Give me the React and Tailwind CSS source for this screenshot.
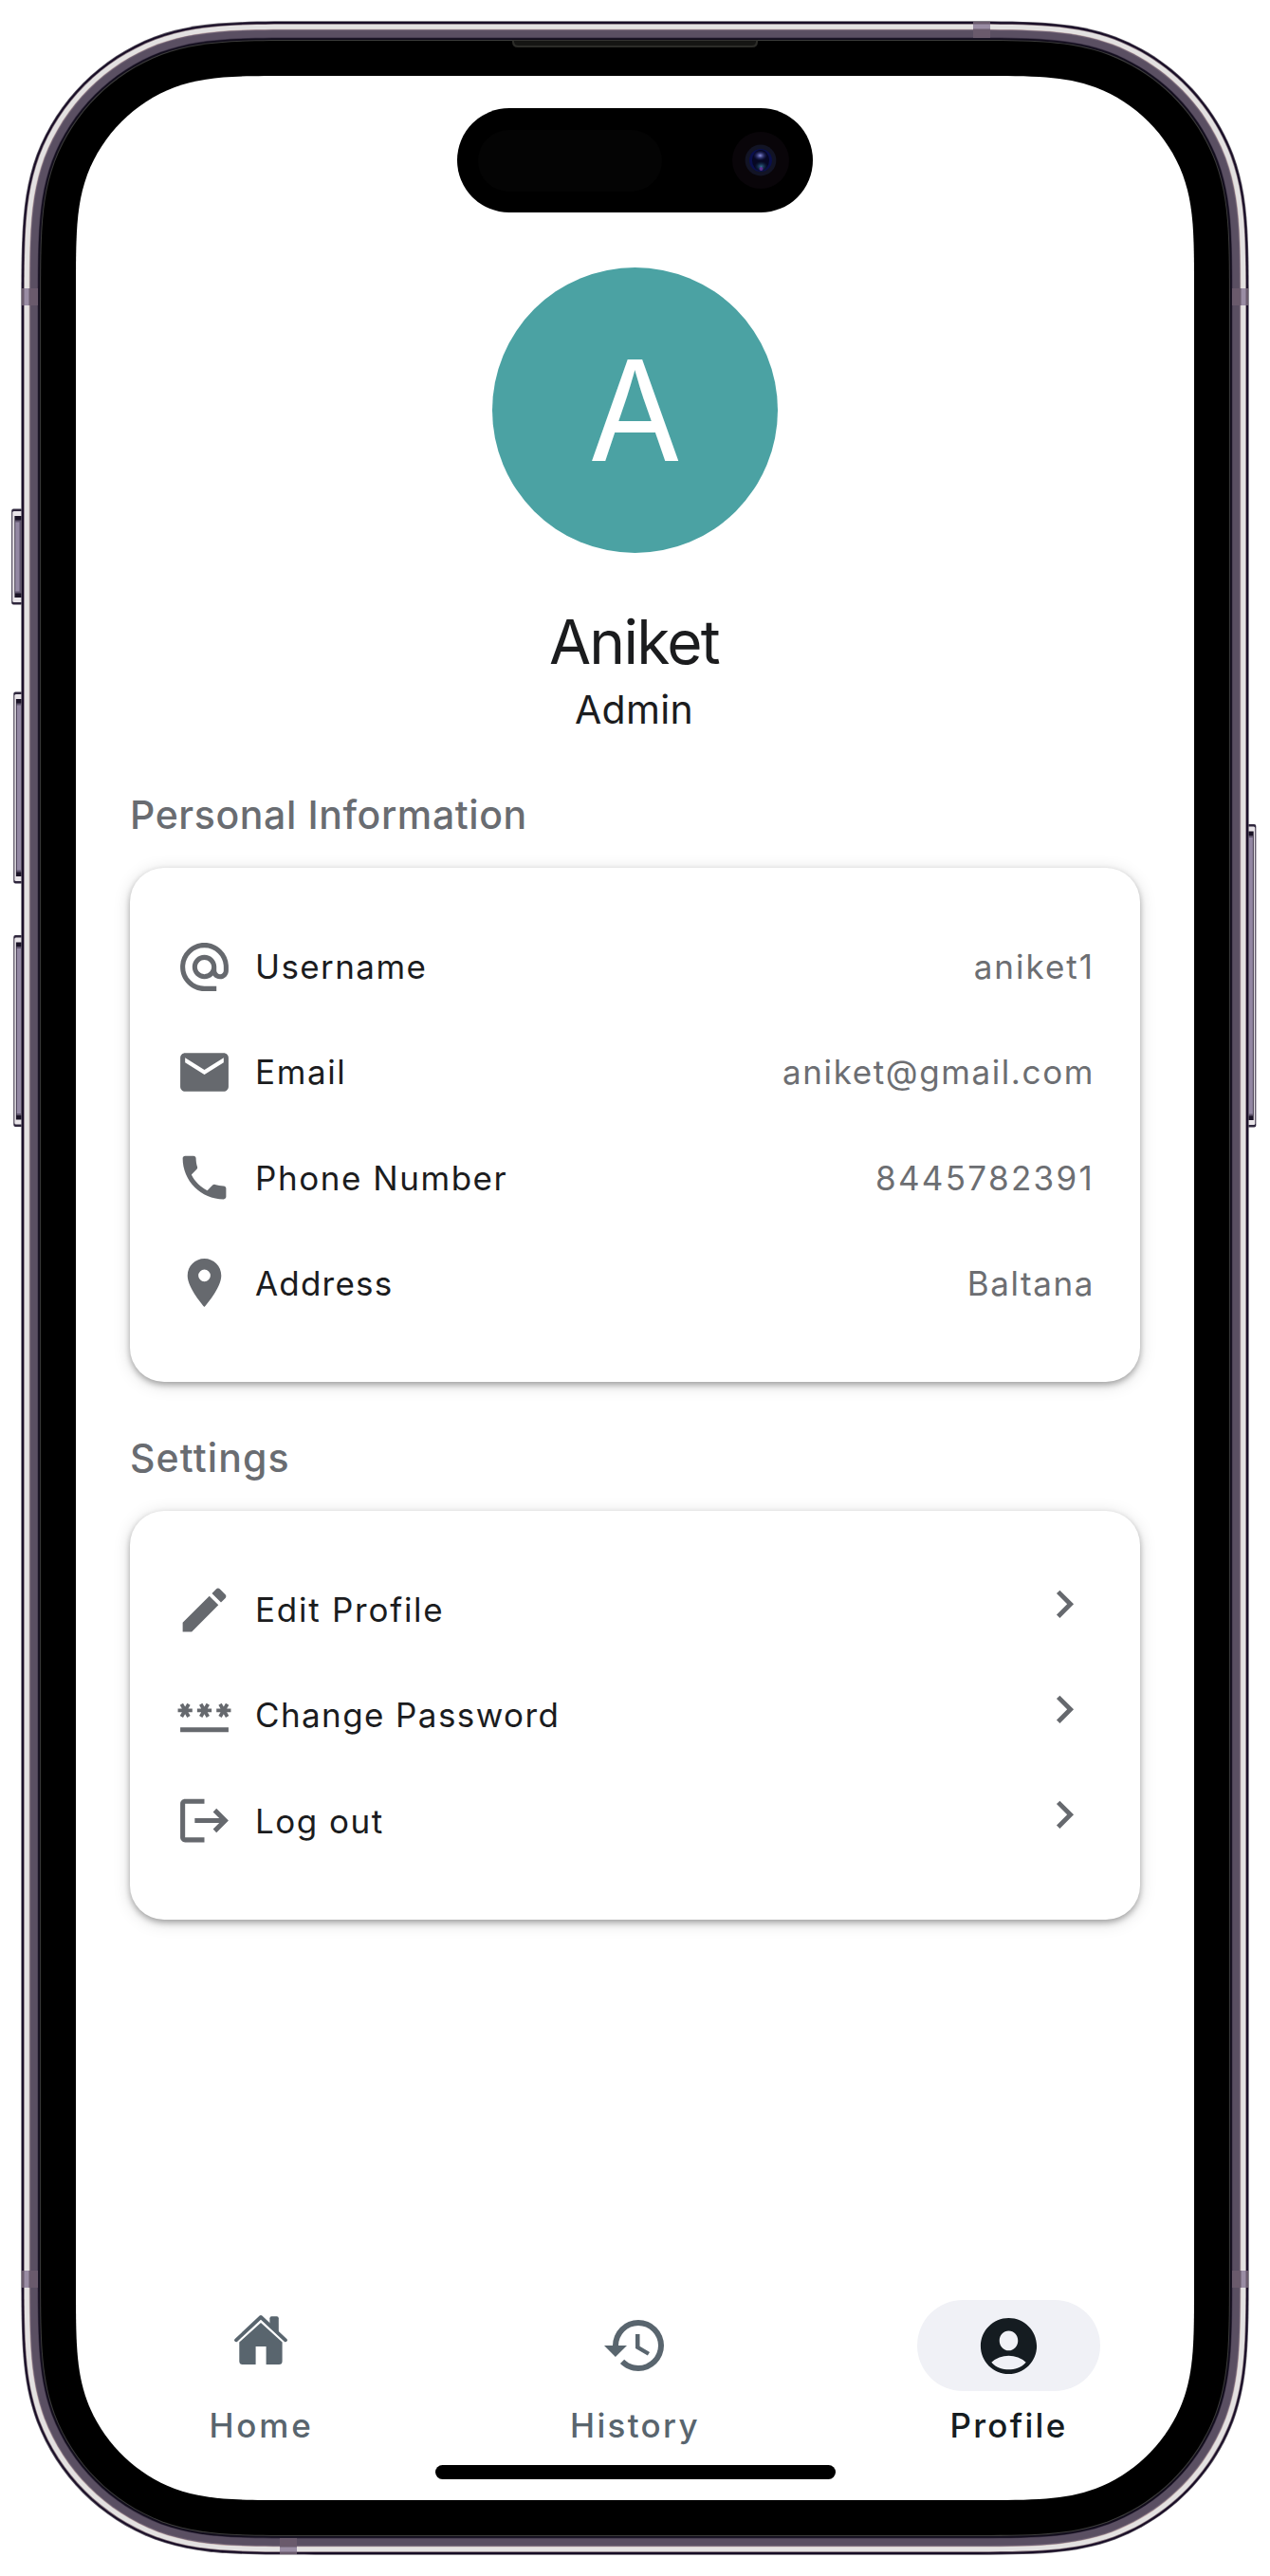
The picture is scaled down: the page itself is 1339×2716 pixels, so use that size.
const ICONS = {
  at: 'M12,15C12.81,15 13.5,14.7 14.11,14.11C14.7,13.5 15,12.81 15,12C15,11.19 14.7,10.5 14.11,9.89C13.5,9.3 12.81,9 12,9C11.19,9 10.5,9.3 9.89,9.89C9.3,10.5 9,11.19 9,12C9,12.81 9.3,13.5 9.89,14.11C10.5,14.7 11.19,15 12,15M12,2C14.75,2 17.1,3 19.05,4.95C21,6.9 22,9.25 22,12V13.45C22,14.45 21.65,15.3 21,16C20.3,16.67 19.5,17 18.5,17C17.3,17 16.31,16.5 15.56,15.5C14.56,16.5 13.38,17 12,17C10.63,17 9.45,16.5 8.46,15.54C7.5,14.55 7,13.38 7,12C7,10.63 7.5,9.45 8.46,8.46C9.45,7.5 10.63,7 12,7C13.38,7 14.55,7.5 15.54,8.46C16.5,9.45 17,10.63 17,12V13.45C17,13.86 17.16,14.22 17.46,14.53C17.76,14.84 18.11,15 18.5,15C18.92,15 19.27,14.84 19.57,14.53C19.87,14.22 20,13.86 20,13.45V12C20,9.81 19.23,7.93 17.65,6.35C16.07,4.77 14.19,4 12,4C9.81,4 7.93,4.77 6.35,6.35C4.77,7.93 4,9.81 4,12C4,14.19 4.77,16.07 6.35,17.65C7.93,19.23 9.81,20 12,20H17V22H12C9.25,22 6.9,21 4.95,19.05C3,17.1 2,14.75 2,12C2,9.25 3,6.9 4.95,4.95C6.9,3 9.25,2 12,2Z',
  email: 'M20 4H4c-1.1 0-1.99.9-1.99 2L2 18c0 1.1.9 2 2 2h16c1.1 0 2-.9 2-2V6c0-1.1-.9-2-2-2zm0 4l-8 5-8-5V6l8 5 8-5v2z',
  phone: 'M6.62 10.79c1.44 2.83 3.76 5.14 6.59 6.59l2.2-2.2c.27-.27.67-.36 1.02-.24 1.12.37 2.33.57 3.57.57.55 0 1 .45 1 1V20c0 .55-.45 1-1 1-9.39 0-17-7.61-17-17 0-.55.45-1 1-1h3.5c.55 0 1 .45 1 1 0 1.25.2 2.45.57 3.57.11.35.03.74-.25 1.02l-2.2 2.2z',
  marker: 'M12 2C8.13 2 5 5.13 5 9c0 5.25 7 13 7 13s7-7.75 7-13c0-3.87-3.13-7-7-7zm0 9.5a2.5 2.5 0 0 1 0-5 2.5 2.5 0 0 1 0 5z',
  pencil: 'M3 17.25V21h3.75L17.81 9.94l-3.75-3.75L3 17.25zM20.71 7.04c.39-.39.39-1.02 0-1.41l-2.34-2.34c-.39-.39-1.02-.39-1.41 0l-1.83 1.83 3.75 3.75 1.83-1.83z',
  password: 'M2 17h20v2H2v-2zm1.15-4.05L4 11.47l.85 1.48 1.3-.75-.85-1.48H7v-1.5H5.3l.85-1.47L4.85 7 4 8.47 3.15 7l-1.3.75.85 1.47H1v1.5h1.7l-.85 1.48 1.3.75zm6.7-.75l1.3.75.85-1.48.85 1.48 1.3-.75-.85-1.48H15v-1.5h-1.7l.85-1.47-1.3-.75L12 8.47 11.15 7l-1.3.75.85 1.47H9v1.5h1.7l-.85 1.48zM23 9.22h-1.7l.85-1.47-1.3-.75L20 8.47 19.15 7l-1.3.75.85 1.47H17v1.5h1.7l-.85 1.48 1.3.75.85-1.48.85 1.48 1.3-.75-.85-1.48H23v-1.5z',
  logout: 'M17 7L15.59 8.41L18.17 11H8V13H18.17L15.59 15.58L17 17L22 12M4 5H12V3H4C2.9 3 2 3.9 2 5V19C2 20.1 2.9 21 4 21H12V19H4V5Z',
  chevron: 'M8.59,16.58L13.17,12L8.59,7.41L10,6L16,12L10,18L8.59,16.58Z',
  history: 'M13.5,8H12V13L16.28,15.54L17,14.33L13.5,12.25V8M13,3A9,9 0 0,0 4,12H1L4.96,16.03L9,12H6A7,7 0 0,1 13,5A7,7 0 0,1 20,12A7,7 0 0,1 13,19C11.07,19 9.32,18.21 8.06,16.94L6.64,18.36C8.27,20 10.5,21 13,21A9,9 0 0,0 22,12A9,9 0 0,0 13,3',
  account: 'M12 2C6.48 2 2 6.48 2 12s4.48 10 10 10 10-4.48 10-10S17.52 2 12 2zm0 4.6c1.83 0 3.3 1.57 3.3 3.5S13.83 13.6 12 13.6s-3.3-1.57-3.3-3.5S10.17 6.6 12 6.6zm0 13.8c-2.03 0-4.43-.62-6.14-2.58a9.2 9.2 0 0 1 12.28 0C16.43 19.78 14.03 20.4 12 20.4z',
};

function Icon({ name, className }) {
  return (
    <svg viewBox="0 0 24 24" fill="currentColor" className={className}>
      <path d={ICONS[name]} />
    </svg>
  );
}

function HomeIcon() {
  return (
    <svg viewBox="0 0 61 61" className="h-[61px] w-[61px]" fill="currentColor">
      <path d="M5 29.3 L31 5 L57 29.3" fill="none" stroke="currentColor" strokeWidth="3.8" strokeLinecap="round" strokeLinejoin="round" />
      <path d="M40.4 12 V6.3 Q40.4 4.3 42.4 4.3 H47.8 Q49.8 4.3 49.8 6.3 V21.5 Z" />
      <path d="M8.3 31.5 L31 11 L53.6 31.5 V51.5 Q53.6 55 50.1 55 H36.6 V36 H25.6 V55 H11.8 Q8.3 55 8.3 51.5 Z" />
    </svg>
  );
}

/* Rounded rectangle whose corners ease gently into the straight edges. */
function smoothRect(x, y, w, h, r) {
  const R = x + w;
  const B = y + h;
  const [a, b, c, d, e, f, g] = [1.39, 1.02, 0.832, 0.6315, 0.0727, 0.374, 0.1706].map((k) => k * r);
  return [
    `M${x + a} ${y}H${R - a}`,
    `C${R - b} ${y} ${R - c} ${y} ${R - d} ${y + e}`,
    `C${R - f} ${y + g} ${R - g} ${y + f} ${R - e} ${y + d}`,
    `C${R} ${y + c} ${R} ${y + b} ${R} ${y + a}`,
    `V${B - a}`,
    `C${R} ${B - b} ${R} ${B - c} ${R - e} ${B - d}`,
    `C${R - g} ${B - f} ${R - f} ${B - g} ${R - d} ${B - e}`,
    `C${R - c} ${B} ${R - b} ${B} ${R - a} ${B}`,
    `H${x + a}`,
    `C${x + b} ${B} ${x + c} ${B} ${x + d} ${B - e}`,
    `C${x + f} ${B - g} ${x + g} ${B - f} ${x + e} ${B - d}`,
    `C${x} ${B - c} ${x} ${B - b} ${x} ${B - a}`,
    `V${y + a}`,
    `C${x} ${y + b} ${x} ${y + c} ${x + e} ${y + d}`,
    `C${x + g} ${y + f} ${x + f} ${y + g} ${x + d} ${y + e}`,
    `C${x + c} ${y} ${x + b} ${y} ${x + a} ${y}Z`,
  ].join('');
}

/* Bezel layers from the outside in: [inset, colour]. */
const LAYERS = [
  [0, '#5b5560'],
  [0.8, '#170c26'],
  [2.7, '#7c6b74'],
  [3.4, '#e3e1e1'],
  [8.4, '#c3ada9'],
  [9, '#6e6175'],
  [10, '#5a4f62'],
  [17.3, '#3b3246'],
  [17.9, '#120d1c'],
  [19.8, '#3c3c3b'],
  [20.8, '#000000'],
];

const LEFT_KEYS = [
  [12.2, 536.5, 101, 3.2],
  [14.3, 729.5, 202, 2.6],
  [14.3, 986, 202, 2.6],
];

/* A side button: dark rim, bright bevel, purple face with a soft highlight. */
function SideKey({ x, y, h, rim, flip }) {
  const w = 12;
  return (
    <g transform={flip ? `translate(${2 * x + w} 0) scale(-1 1)` : undefined}>
      <rect x={x} y={y} width={w} height={h} rx="2" fill="#2f273d" />
      <rect x={x + 1} y={y + 2.4} width={w} height={h - 4.8} rx="1.5" fill="#e9e5e9" />
      <rect x={x + rim} y={y + 7.5} width={w} height={h - 15} fill="#1a1326" />
      <rect x={x + rim + 0.6} y={y + 12} width={w} height={h - 24} fill="#5f556d" />
      <rect x={x + rim + 0.9} y={y + 14} width="4.2" height={h - 28} fill="#9388a3" />
    </g>
  );
}

function PhoneFrame() {
  return (
    <svg viewBox="0 0 1339 2716" className="absolute inset-0 h-full w-full" aria-hidden="true">
      {LEFT_KEYS.map(([x, y, h, rim]) => (
        <SideKey key={y} x={x} y={y} h={h} rim={rim} />
      ))}
      <SideKey x={1312.3} y={869} h={319.5} rim={2.6} flip />
      {LAYERS.map(([i, fill]) => (
        <path key={i} d={smoothRect(22.3 + i, 22.3 + i, 1294.4 - 2 * i, 2671.4 - 2 * i, 223 - i)} fill={fill} />
      ))}
      {[304, 2394].map((y) => (
        <g key={y}>
          <rect x="23" y={y} width="17" height="18" fill="#6a5a6c" />
          <rect x="25.5" y={y} width="5" height="18" fill="#9a8da4" />
          <rect x="1299" y={y} width="17" height="18" fill="#6a5a6c" />
          <rect x="1308.5" y={y} width="5" height="18" fill="#9a8da4" />
        </g>
      ))}
      <rect x="1026" y="23" width="18" height="17" fill="#6a5a6c" />
      <rect x="1026" y="25.5" width="18" height="5" fill="#9a8da4" />
      <rect x="295" y="2676" width="18" height="17" fill="#6a5a6c" />
      <rect x="295" y="2685.5" width="18" height="5" fill="#9a8da4" />
      <path d="M540 42.5H799V44Q799 50 793 50H546Q540 50 540 44Z" fill="#2c2c28" />
      <path d="M542 43H797V43.5Q797 48 792 48H547Q542 48 542 43.5Z" fill="#151513" />
      <path d={smoothRect(80, 80, 1179, 2556, 165)} fill="#ffffff" />
    </svg>
  );
}

function DynamicIsland() {
  return (
    <div className="absolute left-[482px] top-[114px] flex h-[110px] w-[375px] items-center justify-between rounded-full bg-black pl-[22px] pr-[25px]">
      <div className="h-[65px] w-[194px] rounded-full bg-[#040404]" />
      <svg viewBox="0 0 60 60" className="h-[60px] w-[60px]">
        <defs>
          <radialGradient id="glintTop">
            <stop offset="0" stopColor="#8a90e0" />
            <stop offset="1" stopColor="#1c2270" stopOpacity="0" />
          </radialGradient>
          <radialGradient id="glintBottom">
            <stop offset="0" stopColor="#2f6a8c" />
            <stop offset="1" stopColor="#0d2b45" stopOpacity="0" />
          </radialGradient>
        </defs>
        <circle cx="30" cy="30" r="30" fill="#090509" />
        <circle cx="30" cy="30" r="16.4" fill="#121425" />
        <circle cx="30" cy="30" r="12" fill="#0a0f4c" />
        <ellipse cx="30" cy="30" rx="9" ry="11" fill="#060723" />
        <ellipse cx="29.5" cy="25" rx="7.5" ry="5.5" fill="url(#glintTop)" />
        <ellipse cx="30.5" cy="36.5" rx="7" ry="5.5" fill="url(#glintBottom)" />
        <circle cx="30.5" cy="39" r="2" fill="#6a2fa0" opacity="0.8" />
      </svg>
    </div>
  );
}

const INFO = [
  { icon: 'at', label: 'Username', ls: 'tracking-[1.4px]', value: 'aniket1', vls: 'tracking-[2px]' },
  { icon: 'email', label: 'Email', ls: 'tracking-[1.6px]', value: 'aniket@gmail.com', vls: 'tracking-[1.6px]' },
  { icon: 'phone', label: 'Phone Number', ls: 'tracking-[1.55px]', value: '8445782391', vls: 'tracking-[2.3px]' },
  { icon: 'marker', label: 'Address', ls: 'tracking-[1.2px]', value: 'Baltana', vls: 'tracking-[1.6px]' },
];

const SETTINGS = [
  { icon: 'pencil', label: 'Edit Profile', ls: 'tracking-[1.75px]' },
  { icon: 'password', label: 'Change Password', ls: 'tracking-[1.4px]' },
  { icon: 'logout', label: 'Log out', ls: 'tracking-[1.5px]' },
];

function Card({ children }) {
  return (
    <div className="mx-[57px] mt-[25px] rounded-[36px] bg-white py-[48.5px] pl-12 pr-12 shadow-[0_3px_18px_rgba(0,0,0,0.15),0_3px_6px_rgba(0,0,0,0.3)]">
      {children}
    </div>
  );
}

function Row({ icon, label, ls, children }) {
  return (
    <div className="flex h-[111.25px] items-center text-[35px] leading-[44px] text-[#1b1c1e]">
      <Icon name={icon} className="h-[61px] w-[61px] text-[#66696e]" />
      <span className={`ml-[23px] grow ${ls}`}>{label}</span>
      {children}
    </div>
  );
}

function Tab({ label, ls, active, children }) {
  return (
    <div className={`flex flex-col items-center ${active ? 'text-[#151c21]' : 'text-[#59656e]'}`}>
      <div className={`flex h-24 w-[193px] items-center justify-center rounded-full ${active ? 'bg-[#f0f1f6]' : ''}`}>
        {children}
      </div>
      <span className={`mt-4 text-[35px] font-medium leading-10 ${ls}`}>{label}</span>
    </div>
  );
}

export default function App() {
  return (
    <div className="relative h-[2716px] w-[1339px] overflow-hidden bg-white p-20 font-['Inter',sans-serif]">
      <PhoneFrame />
      <DynamicIsland />
      <main className="relative flex h-[2556px] w-[1179px] flex-col">
        <div className="mx-auto mt-[202px] flex h-[301px] w-[301px] items-center justify-center rounded-full bg-[#4ba2a3]">
          <span className="scale-x-[0.97] text-[147px] leading-none text-white">A</span>
        </div>
        <h1 className="mt-[52px] -translate-x-px text-center text-[64px] leading-[84px] tracking-[-1.7px] text-[#1b1c1e]">Aniket</h1>
        <p className="-translate-x-px text-center text-[41px] leading-[58px] tracking-[0.3px] text-[#1b1c1e]">Admin</p>

        <h2 className="ml-[57px] mt-[52px] text-[41px] font-medium leading-[60px] tracking-[0.6px] text-[#696c71]">Personal Information</h2>
        <div className="pt-px">
          <Card>
            {INFO.map((r) => (
              <Row key={r.label} icon={r.icon} label={r.label} ls={r.ls}>
                <span className={`text-[#6c6e72] ${r.vls}`}>{r.value}</span>
              </Row>
            ))}
          </Card>
        </div>

        <h2 className="ml-[57px] mt-[50px] text-[41px] font-medium leading-[60px] tracking-[1.1px] text-[#696c71]">Settings</h2>
        <div className="pt-px">
          <Card>
            {SETTINGS.map((r) => (
              <Row key={r.label} icon={r.icon} label={r.label} ls={r.ls}>
                <Icon name="chevron" className="mb-3 mr-[2px] h-[58.6px] w-[58.6px] text-[#66696e]" />
              </Row>
            ))}
          </Card>
        </div>

        <nav className="-mx-[1.5px] mt-auto grid grid-cols-3">
          <Tab label="Home" ls="tracking-[2.8px]">
            <div className="mb-[10px] mr-[3px]">
              <HomeIcon />
            </div>
          </Tab>
          <Tab label="History" ls="tracking-[2.3px]">
            <Icon name="history" className="h-[72px] w-[72px]" />
          </Tab>
          <Tab label="Profile" ls="tracking-[2.3px]" active>
            <Icon name="account" className="h-[71px] w-[71px]" />
          </Tab>
        </nav>
        <div className="mx-auto mb-[22px] mt-[22px] h-[15px] w-[422px] shrink-0 rounded-full bg-black" />
      </main>
    </div>
  );
}
